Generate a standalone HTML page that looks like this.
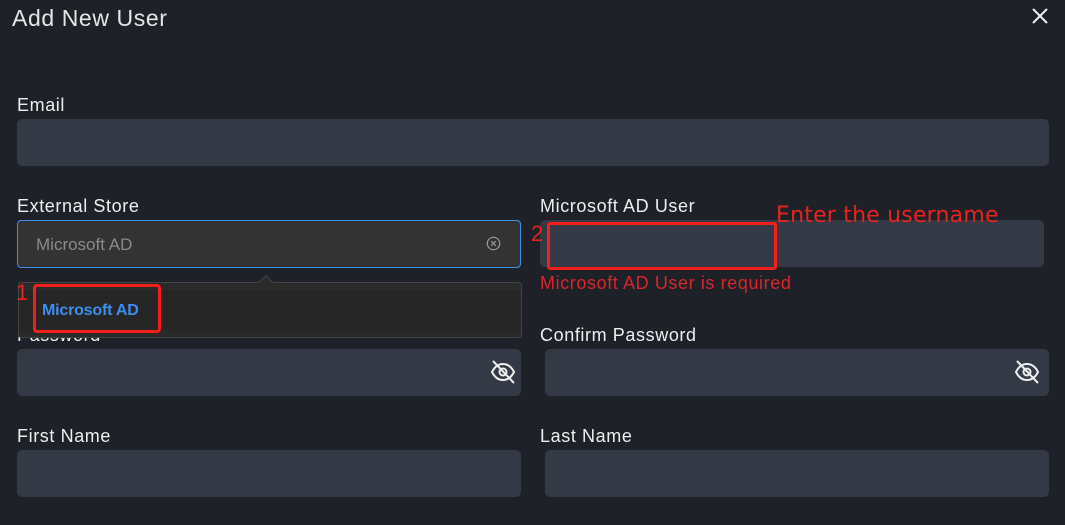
<!DOCTYPE html>
<html><head><meta charset="utf-8"><style>
*{box-sizing:border-box;margin:0;padding:0}
body{width:1065px;height:525px;background:#1f2129;font-family:"Liberation Sans",Arial,sans-serif;position:relative;overflow:hidden;color:#e6e6e6}
.a{position:absolute}
.lbl{position:absolute;font-size:18px;color:#eee;letter-spacing:0.6px}
.in{position:absolute;background:#343946;border-radius:5px;height:47px}
.red{color:#e8231f}
</style></head><body>
<div class="a" style="left:12px;top:5px;font-size:23px;color:#e6e6e6;letter-spacing:0.6px">Add New User</div>
<svg class="a" style="left:1031px;top:7px" width="18" height="18" viewBox="0 0 18 18"><path d="M2 2L16 16M16 2L2 16" stroke="#eee" stroke-width="2"/></svg>

<div class="lbl" style="left:17px;top:95px">Email</div>
<div class="in" style="left:17px;top:119px;width:1032px"></div>

<div class="lbl" style="left:17px;top:196px">External Store</div>
<div class="a" style="left:17px;top:220px;width:504px;height:48px;background:#333333;border:1px solid #3d8ee6;border-radius:4px"></div>
<div class="a" style="left:36px;top:235px;font-size:17px;color:#8a8a8a">Microsoft AD</div>
<svg class="a" style="left:486px;top:236px" width="15" height="15" viewBox="0 0 15 15"><circle cx="7.5" cy="7.5" r="6.2" fill="none" stroke="#999" stroke-width="1.2"/><path d="M5.2 5.2L9.8 9.8M9.8 5.2L5.2 9.8" stroke="#999" stroke-width="1.2"/></svg>

<div class="lbl" style="left:540px;top:196px">Microsoft AD User</div>
<div class="in" style="left:540px;top:220px;width:504px"></div>
<div class="a red" style="left:540px;top:273px;font-size:18px;color:#d8262b;letter-spacing:0.6px">Microsoft AD User is required</div>

<div class="lbl" style="left:17px;top:325px">Password</div>
<div class="in" style="left:17px;top:349px;width:504px"></div>
<div class="lbl" style="left:540px;top:325px">Confirm Password</div>
<div class="in" style="left:545px;top:349px;width:504px"></div>
<svg class="a" style="left:489px;top:358px" width="28" height="28" viewBox="0 0 28 28"><path d="M3 14C6 8 10 6 14 6S22 8 25 14C22 20 18 22 14 22S6 20 3 14Z" fill="none" stroke="#eee" stroke-width="2"/><circle cx="14" cy="14" r="3.5" fill="none" stroke="#eee" stroke-width="2"/><path d="M4 3L25 25" stroke="#eee" stroke-width="2"/></svg>
<svg class="a" style="left:1013px;top:358px" width="28" height="28" viewBox="0 0 28 28"><path d="M3 14C6 8 10 6 14 6S22 8 25 14C22 20 18 22 14 22S6 20 3 14Z" fill="none" stroke="#eee" stroke-width="2"/><circle cx="14" cy="14" r="3.5" fill="none" stroke="#eee" stroke-width="2"/><path d="M4 3L25 25" stroke="#eee" stroke-width="2"/></svg>

<div class="lbl" style="left:17px;top:426px">First Name</div>
<div class="in" style="left:17px;top:450px;width:504px"></div>
<div class="lbl" style="left:540px;top:426px">Last Name</div>
<div class="in" style="left:545px;top:450px;width:504px"></div>

<!-- dropdown -->
<div class="a" style="left:18px;top:282px;width:504px;height:56px;background:#2a2a2a;border:1px solid #444;border-radius:3px"></div>
<div class="a" style="left:19px;top:290px;width:502px;height:41px;background:#262626"></div>
<div class="a" style="left:261px;top:277px;width:10px;height:10px;background:#2a2a2a;border-left:1px solid #444;border-top:1px solid #444;transform:rotate(45deg)"></div>
<div class="a" style="left:42px;top:302px;font-size:16px;font-weight:bold;color:#3c8ef0;letter-spacing:-0.2px">Microsoft AD</div>

<!-- annotations -->
<div class="a" style="left:33px;top:284px;width:128px;height:49px;border:3px solid #f41e1a;border-radius:4px"></div>
<div class="a red" style="left:16px;top:280px;font-size:22px">1</div>
<div class="a" style="left:547px;top:222px;width:230px;height:48px;border:3px solid #f41e1a;border-radius:3px"></div>
<div class="a red" style="left:531px;top:221px;font-size:22px">2</div>
<div class="a red" style="left:776px;top:203px;font-size:22px;font-family:'DejaVu Sans',sans-serif;letter-spacing:0.2px">Enter the username</div>
</body></html>
